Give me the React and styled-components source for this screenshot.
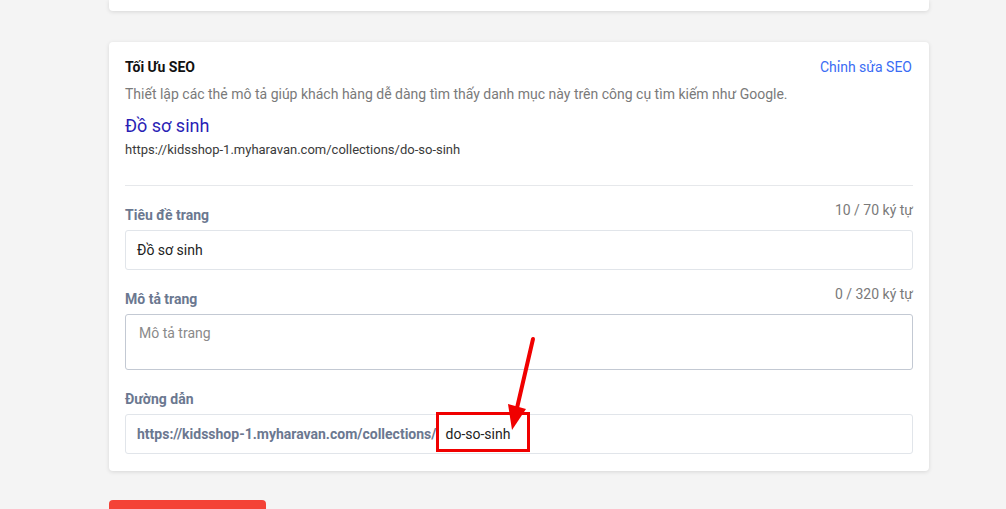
import styled, { createGlobalStyle } from "styled-components";

const GlobalStyle = createGlobalStyle`
    html, body {
        margin: 0;
        padding: 0;
        background: #f4f4f4;
        font-family: Roboto, "Noto Sans", Arial, sans-serif;
        overflow: hidden;
    }
`;

const Page = styled.div`
    width: 820px;
    margin-left: 109px;
    display: flex;
    flex-direction: column;
`;

const TopCard = styled.div`
    flex-shrink: 0;
    height: 11px;
    background: #fff;
    border-radius: 0 0 4px 4px;
    box-shadow: 0 1px 4px rgba(0, 0, 0, 0.12);
`;

const Card = styled.div`
    margin-top: 31px;
    background: #fff;
    border-radius: 4px;
    box-shadow: 0 1px 4px rgba(0, 0, 0, 0.12);
    padding: 16px 16px 17px;
    display: flex;
    flex-direction: column;
`;

const HeaderRow = styled.div`
    display: flex;
    justify-content: space-between;
    align-items: center;
`;

const Title = styled.div`
    font-size: 14px;
    line-height: 16px;
    font-weight: 700;
    color: #111;
`;

const EditLink = styled.a`
    font-size: 14px;
    line-height: 18px;
    color: #3a6cf4;
    text-decoration: none;
    margin-right: 1px;
`;

const Description = styled.div`
    margin-top: 8px;
    font-size: 14px;
    line-height: 20px;
    color: #7a7a7a;
`;

const PreviewTitle = styled.div`
    margin-top: 10px;
    font-size: 18px;
    line-height: 24px;
    color: #2a1fb5;
`;

const PreviewUrl = styled.div`
    margin-top: 3px;
    font-size: 13px;
    line-height: 18px;
    color: #3a3a3a;
`;

const Divider = styled.hr`
    margin: 26px 0 0;
    border: none;
    border-top: 1px solid #e6e8eb;
`;

const Field = styled.div`
    margin-top: ${(p) => p.$gap}px;
    display: flex;
    flex-direction: column;
`;

const LabelRow = styled.div`
    display: flex;
    justify-content: space-between;
    align-items: flex-start;
    margin-bottom: 5px;
`;

const Label = styled.label`
    margin-top: ${(p) => (p.$offset ? 5 : 0)}px;
    font-size: 14px;
    line-height: 20px;
    font-weight: 700;
    color: #6b7890;
`;

const Counter = styled.span`
    font-size: 14px;
    line-height: 20px;
    color: #7a7a7a;
`;

const InputBox = styled.div`
    box-sizing: border-box;
    height: ${(p) => p.$h}px;
    border: 1px solid ${(p) => (p.$dark ? "#c3c9d3" : "#e1e5ea")};
    border-radius: 3px;
    padding: ${(p) => (p.$area ? "10px 12px" : "0 11px")};
    display: flex;
    align-items: ${(p) => (p.$area ? "flex-start" : "center")};
    font-size: 14px;
    color: #222;
`;

const Placeholder = styled.span`
    color: #8a8a8a;
    margin-left: 1px;
`;

const Prefix = styled.span`
    font-weight: 700;
    color: #6b7890;
`;

const Slug = styled.span`
    position: relative;
    margin-left: 9px;
    color: #222;

    &::after {
        content: "";
        position: absolute;
        left: -10px;
        right: -20px;
        top: -14px;
        bottom: -10px;
        border: 3px solid #f00000;
    }
`;

const Arrow = styled.svg`
    position: absolute;
    left: 50px;
    top: -84px;
    overflow: visible;
`;

const DeleteButton = styled.button`
    flex-shrink: 0;
    margin-top: 29px;
    width: 157px;
    height: 40px;
    border: none;
    border-radius: 4px;
    background: #f44236;
`;

const App = () => {
    return (
        <>
            <GlobalStyle />
            <Page>
                <TopCard />
                <Card>
                    <HeaderRow>
                        <Title>Tối Ưu SEO</Title>
                        <EditLink href="#">Chỉnh sửa SEO</EditLink>
                    </HeaderRow>
                    <Description>
                        Thiết lập các thẻ mô tả giúp khách hàng dễ dàng tìm thấy danh mục này trên công cụ tìm kiếm như Google.
                    </Description>
                    <PreviewTitle>Đồ sơ sinh</PreviewTitle>
                    <PreviewUrl>https://kidsshop-1.myharavan.com/collections/do-so-sinh</PreviewUrl>
                    <Divider />

                    <Field $gap={14}>
                        <LabelRow>
                            <Label $offset>Tiêu đề trang</Label>
                            <Counter>10 / 70 ký tự</Counter>
                        </LabelRow>
                        <InputBox $h={40}>Đồ sơ sinh</InputBox>
                    </Field>

                    <Field $gap={14}>
                        <LabelRow>
                            <Label $offset>Mô tả trang</Label>
                            <Counter>0 / 320 ký tự</Counter>
                        </LabelRow>
                        <InputBox $h={56} $area $dark>
                            <Placeholder>Mô tả trang</Placeholder>
                        </InputBox>
                    </Field>

                    <Field $gap={19}>
                        <LabelRow>
                            <Label>Đường dẫn</Label>
                        </LabelRow>
                        <InputBox $h={40}>
                            <Prefix>https://kidsshop-1.myharavan.com/collections/</Prefix>
                            <Slug>
                                do-so-sinh
                                <Arrow width="50" height="100" viewBox="0 0 50 100">
                                    <line x1="37" y1="-3" x2="21" y2="66" stroke="#f00000" strokeWidth="4" strokeLinecap="round" />
                                    <polygon points="12,62 30,67 16,88" fill="#f00000" />
                                </Arrow>
                            </Slug>
                        </InputBox>
                    </Field>
                </Card>
                <DeleteButton aria-label="Xóa danh mục" />
            </Page>
        </>
    );
};

export default App;
